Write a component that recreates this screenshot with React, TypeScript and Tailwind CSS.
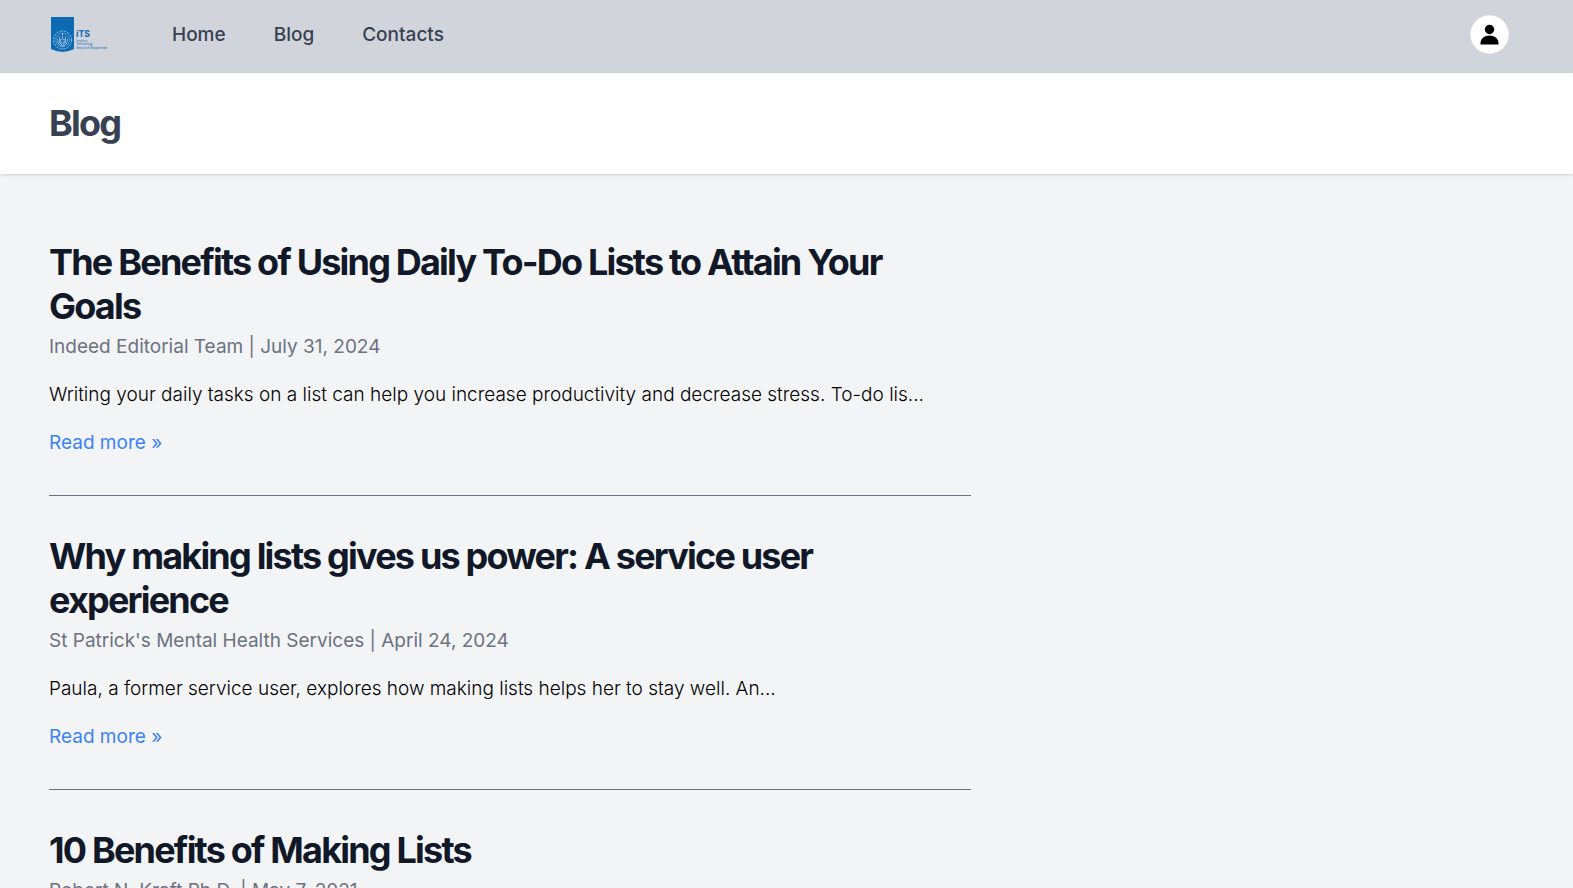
type Post = { title: string; author: string; date: string; excerpt: string };

const posts: Post[] = [
  {
    title: "The Benefits of Using Daily To-Do Lists to Attain Your Goals",
    author: "Indeed Editorial Team",
    date: "July 31, 2024",
    excerpt:
      "Writing your daily tasks on a list can help you increase productivity and decrease stress. To-do lis...",
  },
  {
    title: "Why making lists gives us power: A service user experience",
    author: "St Patrick's Mental Health Services",
    date: "April 24, 2024",
    excerpt: "Paula, a former service user, explores how making lists helps her to stay well. An...",
  },
  {
    title: "10 Benefits of Making Lists",
    author: "Robert N. Kraft Ph.D.",
    date: "May 7, 2021",
    excerpt: "Making lists can bring calm, clarity and focus to a busy day...",
  },
];

const container = "mx-auto max-w-[1536px] px-[38px]";

function Logo() {
  return (
    <svg viewBox="0 0 58 38" className="h-[38px] w-[58px]" role="img" aria-label="ITS">
      <path d="M2 2H25V34Q13.5 40 2 34Z" fill="#0d6bb4" />
      <g fill="none" stroke="#a9cbe6" strokeWidth="0.8">
        <circle cx="13.5" cy="25" r="9" strokeDasharray="2.6 1" />
        <circle cx="13.5" cy="25" r="6.8" strokeWidth="0.5" />
        <path d="M13.5 18v5M10.5 21.5v6l3 3 3-3v-6M8.5 24c0 4 2 7 5 7s5-3 5-7M11.800 24h3.400v4h-3.400z" />
      </g>
      <g fill="#1771b7" fontFamily="Inter, sans-serif">
        <text x="27" y="22" fontSize="8.6" fontWeight="800">iTS</text>
        <g fontSize="3.6">
          <text x="27" y="26.6">Institut</text>
          <text x="27" y="30.2">Teknologi</text>
          <text x="27" y="33.8">Sepuluh Nopember</text>
        </g>
      </g>
    </svg>
  );
}

function Article({ post }: { post: Post }) {
  return (
    <article className="max-w-[922px] border-b border-[#6b7280] py-[38px]">
      <h2 className="mb-[4px] text-[36px] leading-[44px] font-bold tracking-tighter text-[#111827]">
        <a href="#post">{post.title}</a>
      </h2>
      <p className="text-[#6b7280]">
        {post.author} | {post.date}
      </p>
      <p className="my-[19px] font-light">{post.excerpt}</p>
      <a href="#post" className="block text-[#3b82f6]">
        Read more »
      </a>
    </article>
  );
}

export default function App() {
  return (
    <div className="h-screen overflow-hidden bg-[#f3f4f6] font-['Inter',sans-serif] text-[19px] leading-[29px] text-black">
      <nav className="bg-[#d1d5db] pr-[15px] pb-[5px]">
        <div className={container}>
          <div className="flex h-[68px] items-center">
            <a href="#home">
              <Logo />
            </a>
            <div className="ml-[65px] flex gap-[48px] font-medium text-[#374151]">
              <a href="#home">Home</a>
              <a href="#blog">Blog</a>
              <a href="#contacts">Contacts</a>
            </div>
            <button
              type="button"
              aria-label="Open user menu"
              className="ml-auto size-[39px] rounded-full bg-white"
            >
              <svg viewBox="0 0 39 39" className="size-full">
                <circle cx="19.5" cy="19.5" r="19.4" fill="none" stroke="#9a9da3" strokeWidth="0.2" />
                <circle cx="19.5" cy="14.5" r="4.7" />
                <path d="M10.5 29.5v-1.2c0-5 4-7.8 9-7.8s9 2.8 9 7.8v1.2z" />
              </svg>
            </button>
          </div>
        </div>
      </nav>
      <header className="relative bg-white pr-[15px] shadow-[0_1px_3px_rgba(0,0,0,0.15)]">
        <div className={container}>
          <h1 className="py-[29px] text-[36px] leading-[43px] font-bold tracking-tighter text-[#374151]">Blog</h1>
        </div>
      </header>
      <main className="pr-[15px]">
        <div className={`${container} py-[28px]`}>
          {posts.map((post) => (
            <Article key={post.title} post={post} />
          ))}
        </div>
      </main>
    </div>
  );
}
